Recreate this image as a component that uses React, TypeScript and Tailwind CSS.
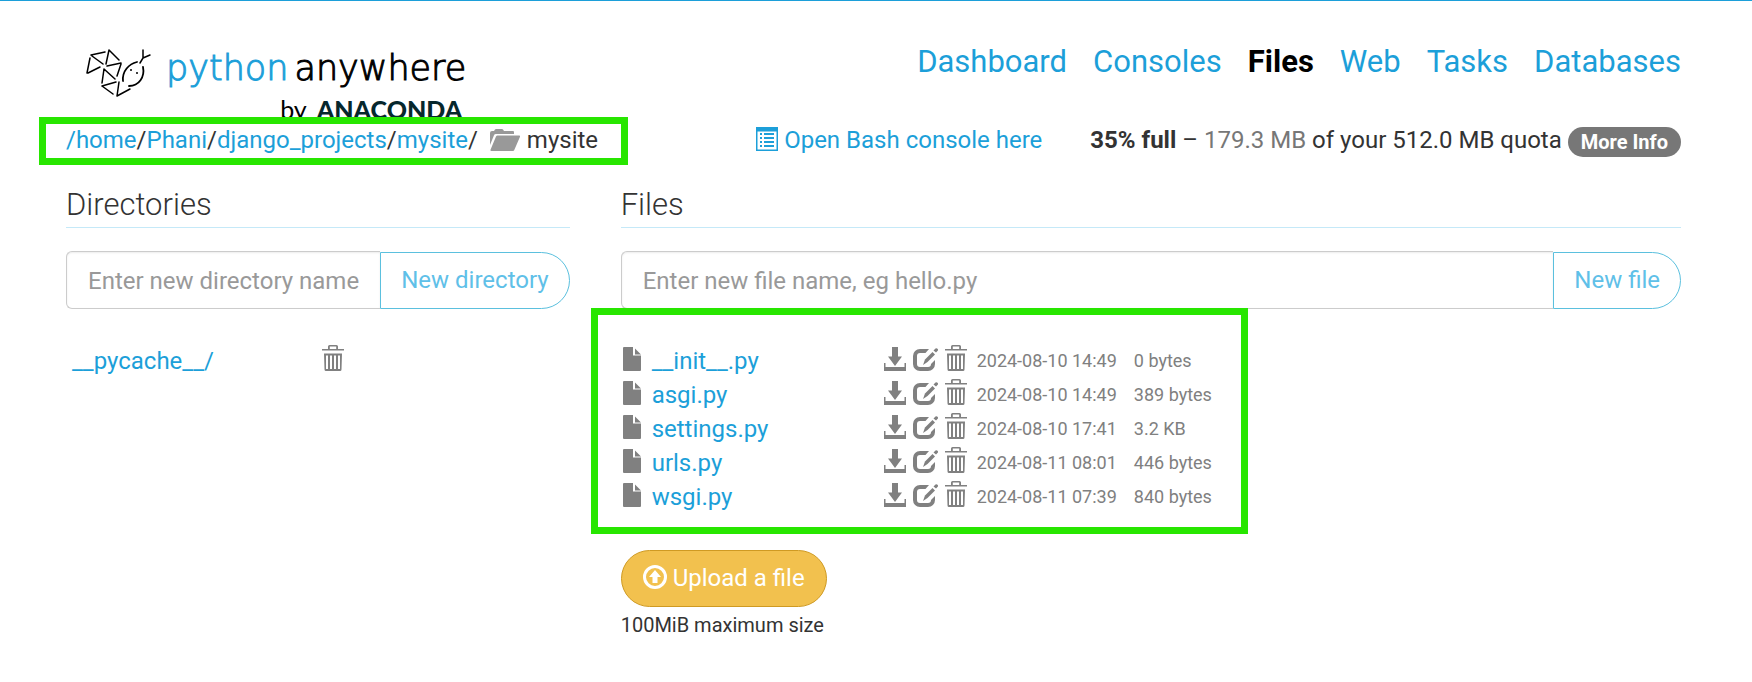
import type { ReactNode } from 'react';

const files = [
  { name: '__init__.py', date: '2024-08-10 14:49', size: '0 bytes' },
  { name: 'asgi.py', date: '2024-08-10 14:49', size: '389 bytes' },
  { name: 'settings.py', date: '2024-08-10 17:41', size: '3.2 KB' },
  { name: 'urls.py', date: '2024-08-11 08:01', size: '446 bytes' },
  { name: 'wsgi.py', date: '2024-08-11 07:39', size: '840 bytes' },
];

const navItems = ['Dashboard', 'Consoles', 'Files', 'Web', 'Tasks', 'Databases'];

const crumbs = ['Phani', 'django_projects', 'mysite'];

function Svg({ w = 24, h = 26, className = '', children }: { w?: number; h?: number; className?: string; children: ReactNode }) {
  return (
    <svg width={w} height={h} viewBox={`0 0 ${w} ${h}`} fill="currentColor" className={`shrink-0 ${className}`} aria-hidden="true">
      {children}
    </svg>
  );
}

function FileIcon() {
  return (
    <Svg w={18}>
      <path d="M1 2h9v8.500h8V25a1 1 0 0 1-1 1H1a1 1 0 0 1-1-1V3a1 1 0 0 1 1-1z" />
      <path d="M12 3.500l6 6h-6z" />
    </Svg>
  );
}

function DownloadIcon() {
  return (
    <Svg w={22}>
      <path d="M8 2h6v9.500h4L11 21l-7-9.500h4z" />
      <path d="M0 18h1.500v4h19v-4H22v8H0z" />
    </Svg>
  );
}

function EditIcon() {
  return (
    <Svg w={25}>
      <path d="M16 4H7a7 7 0 0 0-7 7v8a7 7 0 0 0 7 7h8a7 7 0 0 0 7-7v-4l-4 4a3 3 0 0 1-3 3H7a3 3 0 0 1-3-3v-8a3 3 0 0 1 3-3h5.500z" />
      <path d="M10 20l2-5.500L19.500 7l2.500 2.500-7.500 7.500z" />
      <path d="M20.500 5.500l2-2q.8-.7 1.600 0l.6.6q.7.8 0 1.600l-1.700 1.700z" />
    </Svg>
  );
}

function TrashIcon() {
  return (
    <Svg w={22}>
      <path fillRule="evenodd" d="M7.500 0h7a1.500 1.500 0 0 1 1.500 1.500V4h6v1.500H0V4h6V1.500A1.500 1.500 0 0 1 7.500 0zM7.800 1.600V4h6.400V1.600z" />
      <path fillRule="evenodd" d="M2 8.500h18L19.500 24.500a1.500 1.500 0 0 1-1.500 1.500H4a1.500 1.500 0 0 1-1.500-1.500zM4 10.500V24h2V10.500zM8 10.500V24h2V10.500zM12 10.500V24h2V10.500zM16 10.500V24h2V10.500z" />
    </Svg>
  );
}

function FolderOpenIcon() {
  return (
    <Svg w={30} h={26} className="text-[#999999]">
      <path d="M0 6a2 2 0 0 1 2-2h2l1-1.500q.4-.5 1-.5h6q.6 0 1 .5L14 4h9a1 1 0 0 1 1 1v2H6a2 2 0 0 0-2 1.300L0 18z" />
      <path d="M7.500 8.500H29a1 1 0 0 1 1 1.300L24.500 22.500a2 2 0 0 1-2 1.500H1.500a1 1 0 0 1-1-1.300L6 9.500a2 2 0 0 1 1.500-1z" />
    </Svg>
  );
}

function ConsoleIcon() {
  return (
    <Svg w={22} h={26}>
      <path fillRule="evenodd" d="M0 0h22v24H0zM1.500 4.500V22.500h19V4.500z" />
      <path d="M4 6h2v2H4zM8 6h10v2H8zM4 10h2v2H4zM8 10h10v2H8zM4 14h2v2H4zM8 14h10v2H8zM4 18h2v2H4zM8 18h10v2H8z" />
    </Svg>
  );
}

function UploadIcon() {
  return (
    <Svg w={24} h={26}>
      <path fillRule="evenodd" d="M12 0a12 12 0 1 1 0 24a12 12 0 0 1 0-24zM12 3a9 9 0 1 0 0 18a9 9 0 0 0 0-18z" />
      <path d="M12 5l6 7h-3.500v6h-5v-6H6z" />
    </Svg>
  );
}

function SnakeMark() {
  return (
    <svg width="66" height="48" viewBox="0 0 66 48" fill="none" stroke="#000" strokeWidth="1.500" strokeLinecap="round" className="shrink-0" aria-hidden="true">
      <path d="M5 6L19 3M6 7L17 15M4 9L1 24M2 24L14 18M23 1L20 15M23 1L33 11M21 17L35 14M35 15L31 27M18 20L16 34M18 20L29 30M16 37L30 33M16 37L27 45M33 33L31 47M31 47L44 40" />
      <path d="M51 13C43 15 36 22 37 32M57 18C59 28 53 37 43 37" strokeWidth="1.800" />
      <path d="M54 14l3-5V1M57 9l7-3" />
      <circle cx="45" cy="21" r="1" fill="#000" stroke="none" />
      <circle cx="51" cy="24" r="1" fill="#000" stroke="none" />
    </svg>
  );
}

function NameForm({ id, label, placeholder, button }: { id: string; label: string; placeholder: string; button: string }) {
  return (
    <form className="flex h-[58px] items-stretch" onSubmit={(e) => e.preventDefault()}>
      <input
        id={id}
        type="text"
        aria-label={label}
        placeholder={placeholder}
        className="min-w-0 flex-1 rounded-l-md border border-r-0 border-[#cccccc] px-[21px] pt-[2px] text-2xl shadow-[inset_0_1px_2px_rgba(0,0,0,0.08)] outline-none placeholder:text-[#999999]"
      />
      <button type="submit" className="mt-px rounded-r-full border border-[#5bc0de] px-5 pb-[2px] text-2xl text-[#5fc0e8]">
        {button}
      </button>
    </form>
  );
}

export default function App() {
  return (
    <div className="min-h-screen border-t border-[#1c9fd9] bg-white pr-[45px] pl-10 font-['Roboto',sans-serif] text-2xl leading-[34px] text-[#333333]">
      <header className="flex items-start justify-between px-[26px] pt-10">
        <a href="#home" className="ml-5 block h-[76px] pt-2" aria-label="PythonAnywhere by Anaconda">
          <span className="flex items-start">
            <SnakeMark />
            <span className="ml-[14px] font-['DejaVu_Sans',sans-serif] text-[35px] leading-[38px] font-extralight text-black [-webkit-text-stroke:1px]">
              <span className="text-[#1c9fd9]">python</span>
              <span className="ml-[6px]">anywhere</span>
            </span>
          </span>
          <span className="flex items-baseline justify-end gap-[10px] pr-1 text-[25px] leading-6">
            <span className="font-['Lato',sans-serif] text-black">by</span>
            <span className="font-['Lato',sans-serif] font-black text-[#06272d]">ANACONDA</span>
          </span>
        </a>
        <nav className="flex gap-[26px] pt-px text-[31px] leading-10">
          {navItems.map((item) => (
            <a key={item} href={`#${item.toLowerCase()}`} className={item === 'Files' ? 'font-bold text-black' : 'text-[#1c9fd9]'}>
              {item}
            </a>
          ))}
        </nav>
      </header>

      <div className="flex items-center justify-between px-[26px] pt-[6px]">
        <div className="relative flex items-center bg-white">
          <div className="pointer-events-none absolute -top-[6px] -right-[30px] -bottom-2 -left-[27px] border-[7px] border-[#28e600]" />
          <a href="#root" className="text-[#1c9fd9]">/home</a>
          {crumbs.map((crumb) => (
            <span key={crumb}>
              /<a href={`#${crumb}`} className="text-[#1c9fd9]">{crumb}</a>
            </span>
          ))}
          <span className="mr-3">/</span>
          <FolderOpenIcon />
          <span className="ml-[7px]">mysite</span>
        </div>
        <div className="flex items-center gap-12">
          <a href="#bash" className="flex items-center gap-[6px] text-[#1c9fd9]">
            <ConsoleIcon />
            Open Bash console here
          </a>
          <p className="flex items-center gap-[6px]">
            <span>
              <b>35% full</b> – <span className="text-[#777777]">179.3 MB</span> of your 512.0 MB quota
            </span>
            <a href="#quota" className="mt-1 rounded-full bg-[#777777] px-[13px] text-xl leading-[30px] font-bold text-white">
              More Info
            </a>
          </p>
        </div>
      </div>

      <main className="grid grid-cols-3 pt-[28px]">
        <section className="px-[26px]">
          <h2 className="border-b border-[#c5e9f8] pb-[2px] text-[31px] leading-10 font-light">Directories</h2>
          <div className="pt-[23px]">
            <NameForm id="directory-name" label="Directory name" placeholder="Enter new directory name" button="New directory" />
          </div>
          <div className="flex items-center justify-between pt-[35px] pr-[226px] pl-[6px]">
            <a href="#pycache" className="text-[#1c9fd9]">__pycache__/</a>
            <button type="button" aria-label="Delete directory" className="pb-[6px] text-[#808080]">
              <TrashIcon />
            </button>
          </div>
        </section>

        <section className="col-span-2 pr-[26px] pl-[25px]">
          <h2 className="border-b border-[#c5e9f8] pb-[2px] text-[31px] leading-10 font-light">Files</h2>
          <div className="pt-[23px]">
            <NameForm id="file-name" label="File name" placeholder="Enter new file name, eg hello.py" button="New file" />
          </div>
          <div className="relative mt-[35px] w-fit">
            <div className="pointer-events-none absolute -top-9 -right-9 -bottom-5 -left-[30px] border-[7px] border-[#28e600]" />
            <table className="border-collapse text-[#808080]">
              <tbody>
                {files.map((file) => (
                  <tr key={file.name} className="h-[34px]">
                    <td className="w-[263px] p-0">
                      <span className="flex items-center gap-[11px] pl-[2px]">
                        <span className="pb-[6px]"><FileIcon /></span>
                        <a href={`#${file.name}`} className="text-[#1c9fd9]">{file.name}</a>
                      </span>
                    </td>
                    <td className="p-0">
                      <span className="flex items-center pb-[6px]">
                        <button type="button" aria-label={`Download ${file.name}`}><DownloadIcon /></button>
                        <button type="button" aria-label={`Edit ${file.name}`} className="ml-[7px]"><EditIcon /></button>
                        <button type="button" aria-label={`Delete ${file.name}`} className="ml-[7px]"><TrashIcon /></button>
                      </span>
                    </td>
                    <td className="py-0 pr-0 pl-[10px] text-lg leading-[34px]">{file.date}</td>
                    <td className="py-0 pr-0 pl-[17px] text-lg leading-[34px]">{file.size}</td>
                  </tr>
                ))}
              </tbody>
            </table>
          </div>
          <button type="button" className="mt-9 flex h-[57px] items-center gap-[6px] rounded-full border border-[#cf9a22] bg-[#f2c14e] px-[21px] pb-[2px] text-white">
            <UploadIcon />
            Upload a file
          </button>
          <p className="pt-1 text-xl leading-7">100MiB maximum size</p>
        </section>
      </main>
    </div>
  );
}
